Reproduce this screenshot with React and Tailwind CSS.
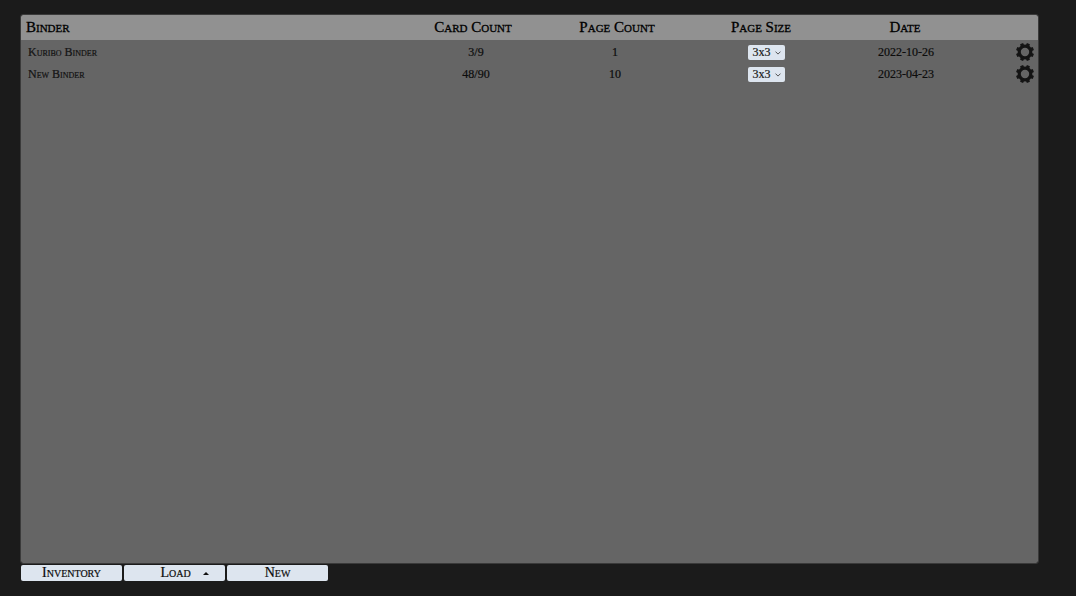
import React from "react";

const binders = [
  { name: "Kuribo Binder", cards: "3/9", pages: "1", size: "3x3", date: "2022-10-26" },
  { name: "New Binder", cards: "48/90", pages: "10", size: "3x3", date: "2023-04-23" },
];

const teeth = [22.5, 67.5, 112.5, 157.5, 202.5, 247.5, 292.5, 337.5];

function Gear() {
  return (
    <svg viewBox="-9 -9 18 18" className="size-[18px]" aria-hidden="true">
      <circle r="5.8" fill="none" stroke="#141414" strokeWidth="3.2" />
      {teeth.map((a) => (
        <path key={a} d="M-1.9 -6L-1.6 -9H1.6L1.9 -6Z" fill="#141414" transform={`rotate(${a})`} />
      ))}
    </svg>
  );
}

function SizeSelect({ name, value }) {
  return (
    <span className="relative inline-flex h-[15px] w-[37px] align-middle">
      <select
        aria-label={`Page size of ${name}`}
        defaultValue={value}
        className="h-full w-full appearance-none rounded-xs bg-[#dde5ef] pl-1 text-xs leading-[15px] text-[#222]"
      >
        <option>3x3</option>
        <option>4x3</option>
        <option>4x4</option>
      </select>
      <svg viewBox="0 0 6 4" className="pointer-events-none absolute right-1 top-[6px] h-1 w-1.5" aria-hidden="true">
        <path d="M0.5 0.6L3 3.1L5.5 0.6" fill="none" stroke="#444" strokeWidth="0.9" />
      </svg>
    </span>
  );
}

function BarButton({ children }) {
  return (
    <button
      type="button"
      className="flex h-4 w-[101px] items-center justify-center rounded-xs bg-[#dde5ef] text-[14px] leading-4 text-[#0c0c0c] [font-variant:small-caps] [-webkit-text-stroke:0.2px_#0c0c0c]"
    >
      {children}
    </button>
  );
}

export default function App() {
  return (
    <div className="flex h-screen flex-col bg-[#1b1b1b] pt-[15px] pr-[38px] pb-[15px] pl-[21px] font-['Liberation_Serif',serif] text-[#0c0c0c]">
      <main className="min-h-0 flex-1 overflow-auto rounded-xs bg-[#656565] outline outline-[#3a3a3a]">
        <table className="w-full table-fixed border-collapse">
          <colgroup>
            <col />
            <col className="w-[14.16%]" />
            <col className="w-[14.16%]" />
            <col className="w-[14.16%]" />
            <col className="w-[14.16%]" />
            <col className="w-[6%]" />
          </colgroup>
          <thead>
            <tr className="h-[25px] bg-[#919191] text-[15px] leading-5 text-black [font-variant:small-caps] [-webkit-text-stroke:0.3px_#000]">
              <th className="pb-0.5 pl-[5px] text-left font-normal">Binder</th>
              <th className="pb-0.5 font-normal">Card Count</th>
              <th className="pb-0.5 font-normal">Page Count</th>
              <th className="pb-0.5 font-normal">Page Size</th>
              <th className="pb-0.5 font-normal">Date</th>
              <th aria-label="Settings" />
            </tr>
          </thead>
          <tbody className="text-center text-xs leading-4 [-webkit-text-stroke:0.2px_#0c0c0c]">
            {binders.map((b) => (
              <tr key={b.name} className="h-[22px]">
                <td className="pt-0.5 pl-[7px] text-left text-[#161616] [font-variant:small-caps]">{b.name}</td>
                <td className="pt-0.5 pl-1.5">{b.cards}</td>
                <td className="pt-0.5 pr-1">{b.pages}</td>
                <td className="pt-0.5 pl-3">
                  <SizeSelect name={b.name} value={b.size} />
                </td>
                <td className="pt-0.5 pl-0.5">{b.date}</td>
                <td className="pt-0.5 pr-1">
                  <button type="button" aria-label={`Settings of ${b.name}`} className="ml-auto flex">
                    <Gear />
                  </button>
                </td>
              </tr>
            ))}
          </tbody>
        </table>
      </main>
      <nav className="mt-0.5 flex gap-0.5">
        <BarButton>Inventory</BarButton>
        <BarButton>
          <span>Load</span>
          <svg viewBox="0 0 6 3" className="-mr-5 ml-3 h-[3px] w-1.5" aria-hidden="true">
            <path d="M0 3L3 0L6 3Z" fill="#111" />
          </svg>
        </BarButton>
        <BarButton>New</BarButton>
      </nav>
    </div>
  );
}
